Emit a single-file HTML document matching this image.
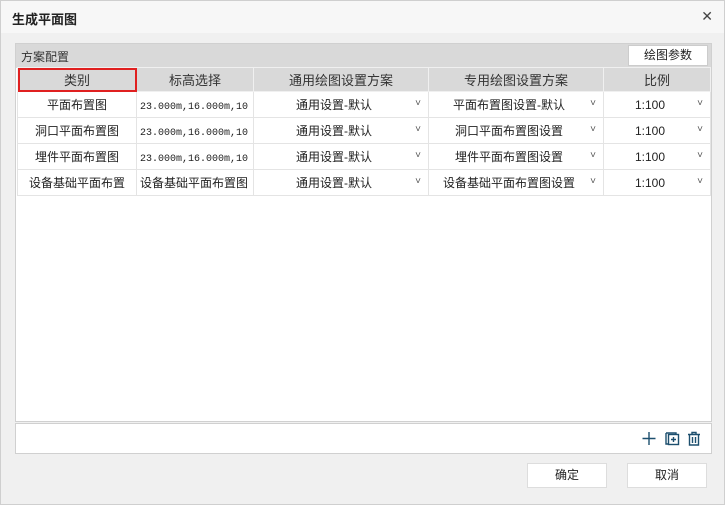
<!DOCTYPE html>
<html><head><meta charset="utf-8"><style>
*{margin:0;padding:0;box-sizing:border-box}
body{width:725px;height:505px;background:#f0f0f0;font-family:"Liberation Sans","Noto Sans CJK SC",sans-serif;font-size:12px;color:#222;position:relative;overflow:hidden;border:1px solid #cfcfcf}
.title{position:absolute;left:0;top:0;width:723px;height:32px;background:#f7f7f7;}
.title span{position:absolute;left:11px;top:8px;font-size:13px;font-weight:bold;color:#222}
.title b{position:absolute;right:11px;top:7px;font-weight:normal;font-size:14px;color:#444}
.panel{position:absolute;left:14px;top:42px;width:697px;height:379px;background:#fff;border:1px solid #d0d0d0}
.strip{position:absolute;left:0;top:0;width:695px;height:24px;background:#d9d9d9}
.strip span{position:absolute;left:5px;top:4px;color:#333}
.btnp{position:absolute;left:612px;top:1px;width:80px;height:21px;background:#fff;border:1px solid #ccc;text-align:center;line-height:19px}
table{position:absolute;left:1px;top:23px;border-collapse:collapse;table-layout:fixed}
td{border:1px solid #e4e4e4;height:26px;text-align:center;vertical-align:middle;white-space:nowrap;overflow:hidden;position:relative;font-size:12px}
tr.h td{background:#d9d9d9;height:24px;border:1px solid #f0f0f0;color:#333;font-size:13px}
td.dd{padding-right:14px}
td.dd:after{content:"˅";position:absolute;right:7px;top:6px;font-size:10px;color:#555}
.num{text-align:left;padding-left:3px}
.num span{font-family:"Liberation Mono",monospace;font-size:10px;position:relative;top:1px}
.tool{position:absolute;left:14px;top:422px;width:697px;height:31px;background:#fff;border:1px solid #d0d0d0}
.b{position:absolute;top:462px;width:80px;height:25px;background:#fff;border:1px solid #ddd;text-align:center;line-height:23px}
</style></head><body>
<div class="title"><span>生成平面图</span><b>✕</b></div>
<div class="panel">
<div class="strip"><span>方案配置</span><div class="btnp">绘图参数</div></div>
<table>
<colgroup><col style="width:119px"><col style="width:117px"><col style="width:175px"><col style="width:175px"><col style="width:107px"></colgroup>
<tr class="h"><td style="outline:2px solid #e02020;outline-offset:-2px">类别</td><td>标高选择</td><td>通用绘图设置方案</td><td>专用绘图设置方案</td><td>比例</td></tr>
<tr><td>平面布置图</td><td class="num"><span>23.000m,16.000m,10</span></td><td class="dd">通用设置-默认</td><td class="dd">平面布置图设置-默认</td><td class="dd">1:100</td></tr>
<tr><td>洞口平面布置图</td><td class="num"><span>23.000m,16.000m,10</span></td><td class="dd">通用设置-默认</td><td class="dd">洞口平面布置图设置</td><td class="dd">1:100</td></tr>
<tr><td>埋件平面布置图</td><td class="num"><span>23.000m,16.000m,10</span></td><td class="dd">通用设置-默认</td><td class="dd">埋件平面布置图设置</td><td class="dd">1:100</td></tr>
<tr><td>设备基础平面布置</td><td style="text-align:left;padding-left:3px">设备基础平面布置图</td><td class="dd">通用设置-默认</td><td class="dd">设备基础平面布置图设置</td><td class="dd">1:100</td></tr>
</table>
</div>
<div class="tool">
<svg style="position:absolute;left:624px;top:6px" width="70" height="18" viewBox="0 0 70 18" fill="none" stroke="#1d4f6e" stroke-width="1.4">
<path d="M9 2v13M2.5 8.5h13"/>
<path d="M26 3v11h2"/><rect x="28.5" y="4.5" width="10" height="10"/><path d="M26 3h10v1.5M33.5 7v5M31 9.5h5"/>
<path d="M48 4.5h12M52 4.5V2.5h4v2M49.5 4.5v10.5h9V4.5M52.5 7v6M55.5 7v6"/>
</svg>
</div>
<div class="b" style="left:526px">确定</div>
<div class="b" style="left:626px">取消</div>
</body></html>
